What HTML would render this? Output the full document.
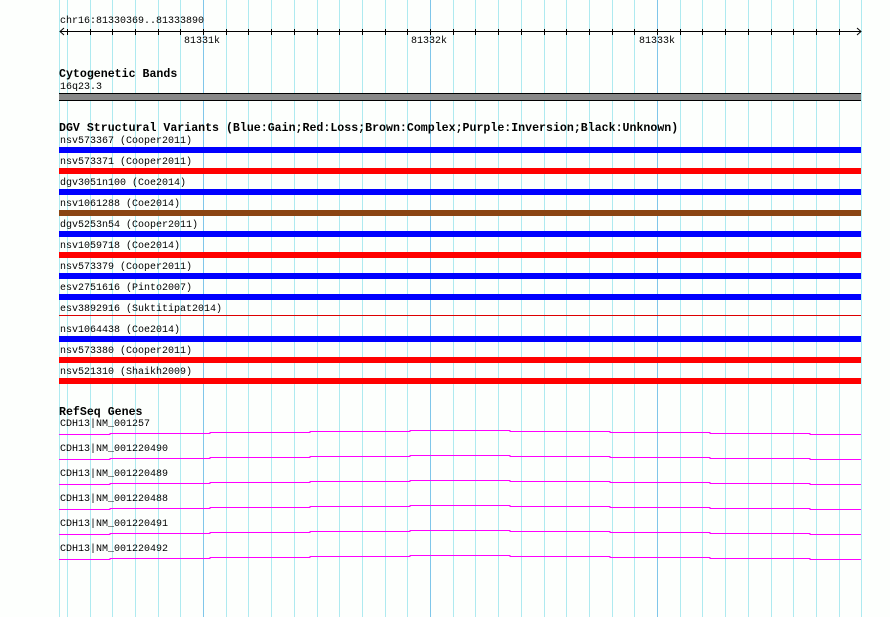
<!DOCTYPE html>
<html><head><meta charset="utf-8"><style>
body{margin:0;background:#fdfffd;width:890px;height:617px;overflow:hidden;position:relative;font-family:"Liberation Mono","DejaVu Sans Mono",monospace;}
.t{position:absolute;font-size:10px;line-height:11px;color:#000;white-space:pre;margin-top:1px;}
.h{position:absolute;font-size:11.6px;line-height:12px;font-weight:bold;color:#000;white-space:pre;margin-top:1px;}
.b{position:absolute;left:59px;width:802px;height:6px;}
.v{position:absolute;top:0;height:617px;width:1px;background:#aeeaf0;}
</style></head><body>
<div id="vl"></div>
<svg style="position:absolute;left:0;top:0" width="890" height="617">
<g id="lines"></g>
</svg>
<script>
var s='';for(var k=-6;k<=29;k++){var x=Math.round(203+22.7*k);var c=(k%10==0)?'#7fc6ea':'#aeeaf0';s+='<div class="v" style="left:'+x+'px;background:'+c+'"></div>';}
s+='<div class="v" style="left:59px"></div>';
document.getElementById('vl').innerHTML=s;
var g='<line x1="60" y1="31.5" x2="861" y2="31.5" stroke="#000"/><polyline points="64,28 60,31.5 64,35" fill="none" stroke="#000"/><polyline points="857,28 861,31.5 857,35" fill="none" stroke="#000"/>';
for(var k=-6;k<=28;k++){var x=Math.round(203+22.7*k)+0.5;g+='<line x1="'+x+'" y1="29" x2="'+x+'" y2="35" stroke="#000"/>';}
var segs=[[59,110,4],[110,210,3],[210,310,2],[310,410,1],[410,510,0],[510,610,1],[610,710,2],[710,810,3],[810,861,4]];
for(var i=0;i<6;i++){var base=430.5+i*25;var p='';segs.forEach(function(q){var y=base+q[2];p+=q[0]+','+y+' '+q[1]+','+y+' ';});g+='<polyline points="'+p+'" fill="none" stroke="#f0f" stroke-width="1"/>';}
document.getElementById('lines').innerHTML=g;
</script>
<div class="t" style="left:60px;top:15px">chr16:81330369..81333890</div>
<div class="t" style="left:184px;top:35px">81331k</div>
<div class="t" style="left:411px;top:35px">81332k</div>
<div class="t" style="left:639px;top:35px">81333k</div>
<div class="h" style="left:59px;top:68px">Cytogenetic Bands</div>
<div class="t" style="left:60px;top:81px">16q23.3</div>
<div class="b" style="top:93px;height:6px;background:#888;border-top:1px solid #000;border-bottom:1px solid #000;left:59px;width:802px"></div>
<div class="h" style="left:59px;top:122px">DGV Structural Variants (Blue:Gain;Red:Loss;Brown:Complex;Purple:Inversion;Black:Unknown)</div>
<div class="t" style="left:60px;top:135px">nsv573367 (Cooper2011)</div><div class="b" style="top:147px;background:#00f"></div>
<div class="t" style="left:60px;top:156px">nsv573371 (Cooper2011)</div><div class="b" style="top:168px;background:#f00"></div>
<div class="t" style="left:60px;top:177px">dgv3051n100 (Coe2014)</div><div class="b" style="top:189px;background:#00f"></div>
<div class="t" style="left:60px;top:198px">nsv1061288 (Coe2014)</div><div class="b" style="top:210px;background:#8b4513"></div>
<div class="t" style="left:60px;top:219px">dgv5253n54 (Cooper2011)</div><div class="b" style="top:231px;background:#00f"></div>
<div class="t" style="left:60px;top:240px">nsv1059718 (Coe2014)</div><div class="b" style="top:252px;background:#f00"></div>
<div class="t" style="left:60px;top:261px">nsv573379 (Cooper2011)</div><div class="b" style="top:273px;background:#00f"></div>
<div class="t" style="left:60px;top:282px">esv2751616 (Pinto2007)</div><div class="b" style="top:294px;background:#00f"></div>
<div class="t" style="left:60px;top:303px">esv3892916 (Suktitipat2014)</div><div class="b" style="top:315px;height:1px;background:#d00"></div>
<div class="t" style="left:60px;top:324px">nsv1064438 (Coe2014)</div><div class="b" style="top:336px;background:#00f"></div>
<div class="t" style="left:60px;top:345px">nsv573380 (Cooper2011)</div><div class="b" style="top:357px;background:#f00"></div>
<div class="t" style="left:60px;top:366px">nsv521310 (Shaikh2009)</div><div class="b" style="top:378px;background:#f00"></div>
<div class="h" style="left:59px;top:406px">RefSeq Genes</div>
<div class="t" style="left:60px;top:418px">CDH13|NM_001257</div>
<div class="t" style="left:60px;top:443px">CDH13|NM_001220490</div>
<div class="t" style="left:60px;top:468px">CDH13|NM_001220489</div>
<div class="t" style="left:60px;top:493px">CDH13|NM_001220488</div>
<div class="t" style="left:60px;top:518px">CDH13|NM_001220491</div>
<div class="t" style="left:60px;top:543px">CDH13|NM_001220492</div>
</body></html>
